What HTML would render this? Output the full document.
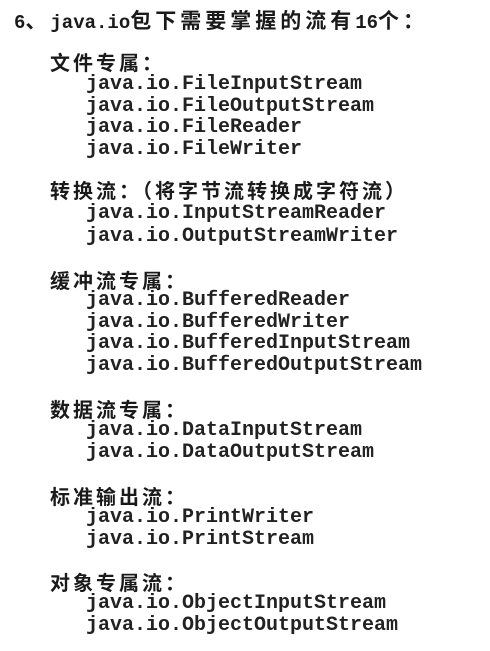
<!DOCTYPE html>
<html><head><meta charset="utf-8"><style>
body{margin:0;width:490px;height:651px;background:#fff;position:relative;overflow:hidden;color:#1a1a1a}
div{position:absolute;white-space:nowrap;line-height:22px}
.h{font-family:"Noto Sans CJK SC",sans-serif;font-weight:bold;font-size:20px;letter-spacing:3px;left:50px}
.c{font-family:"Liberation Mono",monospace;font-weight:bold;font-size:20px;left:86px;color:#222}
.t{font-family:"Liberation Mono","Noto Sans CJK SC",monospace;font-weight:bold;font-size:19px;left:14px}
.t span{font-family:"Noto Sans CJK SC",sans-serif;font-size:21px;letter-spacing:4px}
</style></head><body>
<div class="t" style="top:9px">6<span>、</span>java.io<span>包下需要掌握的流有</span>16<span>个：</span></div>
<div class="h" style="top:51px">文件专属：</div>
<div class="c" style="top:74px">java.io.FileInputStream</div>
<div class="c" style="top:96px">java.io.FileOutputStream</div>
<div class="c" style="top:117px">java.io.FileReader</div>
<div class="c" style="top:139px">java.io.FileWriter</div>
<div class="h" style="top:179px">转换流：（将字节流转换成字符流）</div>
<div class="c" style="top:203px">java.io.InputStreamReader</div>
<div class="c" style="top:226px">java.io.OutputStreamWriter</div>
<div class="h" style="top:269px">缓冲流专属：</div>
<div class="c" style="top:290px">java.io.BufferedReader</div>
<div class="c" style="top:312px">java.io.BufferedWriter</div>
<div class="c" style="top:333px">java.io.BufferedInputStream</div>
<div class="c" style="top:355px">java.io.BufferedOutputStream</div>
<div class="h" style="top:398px">数据流专属：</div>
<div class="c" style="top:420px">java.io.DataInputStream</div>
<div class="c" style="top:442px">java.io.DataOutputStream</div>
<div class="h" style="top:485px">标准输出流：</div>
<div class="c" style="top:507px">java.io.PrintWriter</div>
<div class="c" style="top:529px">java.io.PrintStream</div>
<div class="h" style="top:571px">对象专属流：</div>
<div class="c" style="top:593px">java.io.ObjectInputStream</div>
<div class="c" style="top:615px">java.io.ObjectOutputStream</div>
</body></html>
